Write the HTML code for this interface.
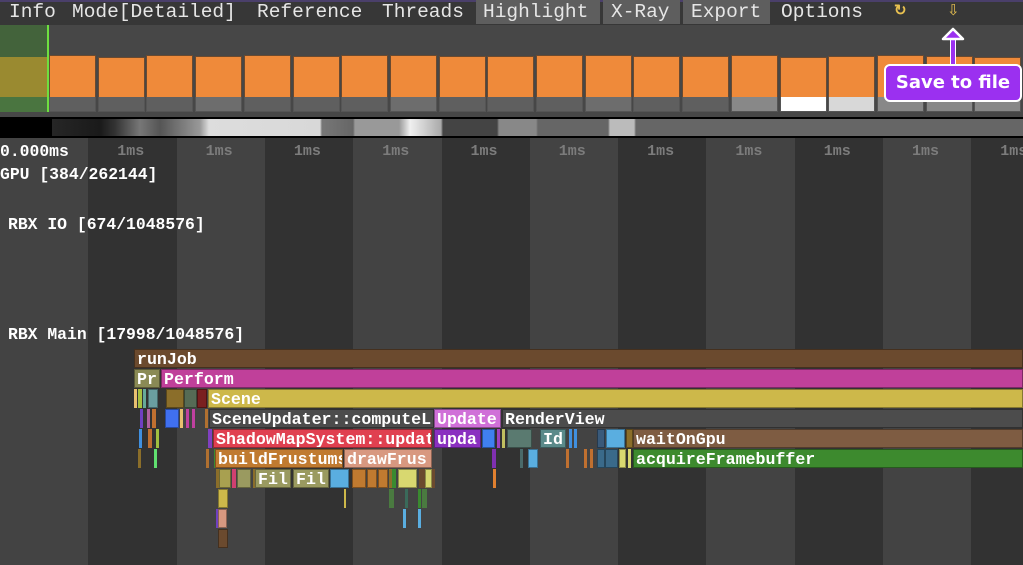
<!DOCTYPE html>
<html><head><meta charset="utf-8"><style>
*{margin:0;padding:0;box-sizing:border-box}
body{width:1023px;height:565px;overflow:hidden;background:#3a3a3a;position:relative;font-family:"Liberation Mono",monospace}
.a{position:absolute}
.m{position:absolute;top:0;height:24px;line-height:24px;font-size:19.5px;color:#e6e6e6;white-space:pre}
.mb{background:#5e5e5e}
.f{position:absolute;height:19px;font-weight:bold;font-size:16.6px;line-height:19px;color:#fff;white-space:nowrap;overflow:hidden;padding-left:2px;border:1px solid rgba(0,0,0,.35)}
.h{position:absolute;font-weight:bold;font-size:16.4px;color:#fff;white-space:pre}
.r{position:absolute;top:143px;font-weight:bold;font-size:15px;color:#7c7c7c}
</style></head><body>
<div class="a" style="left:0;top:0;width:1023px;height:25px;background:#373737;border-top:2px solid #4a3f6a"></div>
<div class="m" style="left:9px">Info</div>
<div class="m" style="left:72px">Mode[Detailed]</div>
<div class="m" style="left:257px">Reference</div>
<div class="m" style="left:382px">Threads</div>
<div class="m mb" style="left:476px;width:124px;padding-left:7px">Highlight</div>
<div class="m mb" style="left:603px;width:77px;padding-left:8px">X-Ray</div>
<div class="m mb" style="left:683px;width:87px;padding-left:8px">Export</div>
<div class="m" style="left:781px">Options</div>
<div class="m" style="left:894px;color:#e8c050;font-size:15px;font-weight:bold">↻</div>
<div class="m" style="left:947px;color:#e8c050;font-size:15px">⇩</div>
<div class="a" style="left:0;top:25px;width:1023px;height:92px;background:#474747"></div>
<div class="a" style="left:0;top:25px;width:48px;height:87px;background:#43633b"></div>
<div class="a" style="left:0;top:57px;width:48px;height:40px;background:#9a8a30"></div>
<div class="a" style="left:0;top:97px;width:48px;height:15px;background:#4a7540"></div>
<div class="a" style="left:47px;top:25px;width:2px;height:87px;background:#6ee040"></div>
<div id="bars"></div>
<div class="a" style="left:0;top:117px;width:1023px;height:21px;background:#000"></div>
<div class="a" style="left:0;top:119px;width:1023px;height:17px;background:linear-gradient(90deg,#000 0,#000 52px,#262626 52px,#1a1a1a 100px,#333 115px,#777 140px,#555 160px,#999 200px,#ddd 209px,#d8d8d8 320px,#777 322px,#666 353px,#999 355px,#999 399px,#f0f0f0 410px,#aaa 441px,#444 443px,#444 497px,#888 499px,#888 536px,#666 538px,#666 608px,#bbb 610px,#bbb 634px,#666 636px,#666 1023px)"></div>
<div id="cols"></div>
<div class="h" style="left:0;top:142px">0.000ms</div>
<div class="h" style="left:0;top:165px">GPU [384/262144]</div>
<div class="h" style="left:8px;top:215px">RBX IO [674/1048576]</div>
<div class="h" style="left:8px;top:325px">RBX Main [17998/1048576]</div>
<div id="fl"></div>
<div class="a" style="left:950px;top:36px;width:6px;height:30px;background:#fff"></div>
<div class="a" style="left:951px;top:36px;width:4px;height:30px;background:#9b30f0"></div>
<svg class="a" style="left:941px;top:26px" width="24" height="16"><path d="M2 13 L12 3 L22 13 Z" fill="#9b30f0" stroke="#fff" stroke-width="2.5" stroke-linejoin="round"/></svg>
<div class="a" style="left:884px;top:64px;width:138px;height:38px;background:#9b30f0;border:2px solid #fff;border-radius:6px;color:#fff;font-family:'DejaVu Sans','Liberation Sans',sans-serif;font-weight:bold;font-size:18px;line-height:34px;text-align:center">Save to file</div>
<script>
var b='',cols=['#5f5f5f','#5f5f5f','#5f5f5f','#6d6d6d','#5f5f5f','#5f5f5f','#5f5f5f','#6d6d6d','#5f5f5f','#5f5f5f','#5f5f5f','#6d6d6d','#5f5f5f','#5f5f5f','#888','#fff','#d8d8d8','#888','#888','#888','#fff'];
var tops=[55,57,55,56,55,56,55,55,56,56,55,55,56,56,55,57,56,55,56,57,57];
for(var i=0;i<20;i++){var x=49+i*48.7;
b+='<div class="a" style="left:'+x+'px;top:'+tops[i]+'px;width:47px;height:'+(97-tops[i])+'px;background:#ef8a3a;border:1px solid #6a4a30;border-bottom:none"></div>';
b+='<div class="a" style="left:'+x+'px;top:97px;width:47px;height:15px;background:'+cols[i]+';border:1px solid #555;border-top:none"></div>';}
document.getElementById('bars').innerHTML=b;
var c='';for(var i=0;i<12;i++){var x=i*88.3;c+='<div class="a" style="left:'+x+'px;top:138px;width:89px;height:427px;background:'+(i%2?'#323232':'#434343')+'"></div>';if(i>0)c+='<div class="r" style="left:'+(x+29)+'px">1ms</div>';}
document.getElementById('cols').innerHTML=c;
var F=[[134,889,0,'#6b4a2e','runJob'],[134,26,1,'#8a8a55','Pr'],[161,862,1,'#c0409a','Perform'],
[134,3,2,'#e8c070',''],[138,4,2,'#a8c040',''],[143,3,2,'#6a9',''],[148,10,2,'#6a9ea0',''],[166,18,2,'#8b6e2a',''],[184,13,2,'#566b55',''],[197,10,2,'#7a2020',''],[208,815,2,'#cdb84a','Scene'],
[140,3,3,'#7040c0',''],[147,3,3,'#b060a0',''],[152,4,3,'#c07030',''],[165,14,3,'#4070f0',''],[180,3,3,'#e8c070',''],[186,3,3,'#c040a0',''],[192,3,3,'#c040a0',''],[205,3,3,'#b07030',''],[209,225,3,'#4c4c4c','SceneUpdater::computeL'],[434,67,3,'#d070d8','Update'],[502,521,3,'#4c4c4c','RenderView'],
[139,3,4,'#4090e0',''],[148,4,4,'#c07030',''],[156,3,4,'#a0c040',''],[208,4,4,'#8040c0',''],[213,219,4,'#e04050','ShadowMapSystem::updat'],[434,47,4,'#8a30c0','upda'],[482,13,4,'#4080f0',''],[497,3,4,'#a040c0',''],[502,3,4,'#c0c060',''],[507,25,4,'#5a7a70',''],[540,26,4,'#5a8a8a','Id'],[569,3,4,'#4090e0',''],[574,3,4,'#4090e0',''],[597,8,4,'#3a5a7a',''],[606,19,4,'#5aaee0',''],[626,7,4,'#8b6e2a',''],[633,390,4,'#7e5c42','waitOnGpu'],
[138,3,5,'#8b6e2a',''],[154,3,5,'#60e070',''],[206,3,5,'#b07030',''],[214,3,5,'#3a8a30',''],[215,128,5,'#c07a30','buildFrustums'],[344,88,5,'#d89880','drawFrus'],[492,4,5,'#8030b0',''],[520,3,5,'#4a6a6a',''],[528,10,5,'#5aaee0',''],[566,3,5,'#c07030',''],[584,3,5,'#c07030',''],[590,3,5,'#c07030',''],[597,8,5,'#3a6a8a',''],[605,13,5,'#3a6a8a',''],[619,7,5,'#d8d870',''],[628,3,5,'#d8d870',''],[633,390,5,'#3d8a2e','acquireFramebuffer'],
[216,3,6,'#8b6e2a',''],[219,12,6,'#a8a050',''],[232,4,6,'#d04070',''],[237,14,6,'#9a9a60',''],[253,3,6,'#8b6e2a',''],[255,36,6,'#9a9a60','Fil'],[293,36,6,'#9a9a60','Fil'],[330,19,6,'#5aaee0',''],[352,14,6,'#c07a30',''],[367,10,6,'#c07a30',''],[378,10,6,'#c07a30',''],[389,4,6,'#8b6e2a',''],[392,4,6,'#3a8a30',''],[398,19,6,'#d8d870',''],[419,3,6,'#6b4a2e',''],[422,3,6,'#6b4a2e',''],[425,7,6,'#d8d870',''],[432,3,6,'#6b4a2e',''],[493,3,6,'#e08030',''],
[218,10,7,'#cdb84a',''],[344,2,7,'#cdb84a',''],[389,5,7,'#4a7a40',''],[405,3,7,'#3a6a5a',''],[418,3,7,'#3a8a30',''],[422,5,7,'#4a7a40',''],
[216,3,8,'#7040c0',''],[218,9,8,'#d89880',''],[403,3,8,'#5aaee0',''],[418,3,8,'#5aaee0',''],
[218,10,9,'#6b4a2e','']];
var s='';F.forEach(function(a){s+='<div class="f" style="left:'+a[0]+'px;top:'+(349+a[2]*20)+'px;width:'+a[1]+'px;background:'+a[3]+(a[1]<6?';border:none':'')+'">'+a[4]+'</div>';});
document.getElementById('fl').innerHTML=s;
</script>
</body></html>
